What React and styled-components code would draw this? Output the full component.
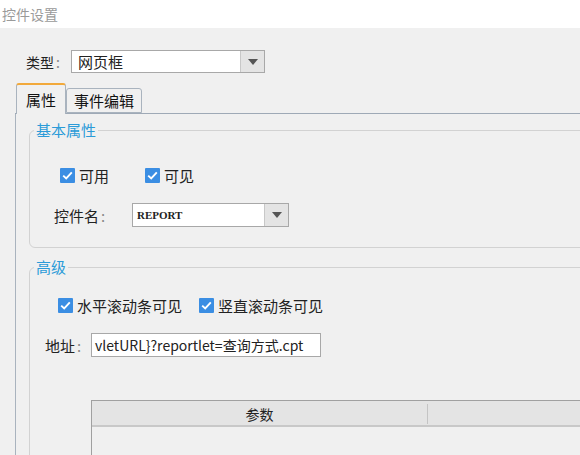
import React from 'react';
import styled, { createGlobalStyle } from 'styled-components';

const GlobalStyle = createGlobalStyle`
    html, body {
        margin: 0;
        padding: 0;
        background: #fff;
        overflow: hidden;
    }
    body {
        font-family: "Noto Sans CJK SC", "Liberation Sans", sans-serif;
        color: #222;
    }
`;

const Page = styled.div`
    width: 580px;
    height: 455px;
    overflow: hidden;
    display: flex;
    flex-direction: column;
`;

const Title = styled.div`
    height: 28px;
    line-height: 28px;
    padding-left: 2px;
    font-size: 14px;
    color: #9a9a9a;
    background: #fff;
`;

const Panel = styled.div`
    flex: 1;
    background: #f0f0f0;
    padding-top: 22px;
    overflow: hidden;
`;

const FormRow = styled.div`
    display: flex;
    align-items: center;
    height: ${p => p.h || 24}px;
    padding-left: ${p => p.indent || 0}px;
    margin-top: ${p => p.top || 0}px;
`;

const Label = styled.span`
    font-size: ${p => p.size || 15}px;
    width: ${p => p.w}px;
    white-space: nowrap;
    color: #222;
    & i {
        font-style: normal;
        color: #888;
        margin-left: 2px;
    }
`;

const Combo = styled.div`
    width: ${p => p.w}px;
    height: ${p => p.h || 23}px;
    box-sizing: border-box;
    border: 1px solid #a8a8a8;
    background: #fff;
    display: flex;
`;

const ComboText = styled.div`
    flex: 1;
    display: flex;
    align-items: center;
    padding-left: ${p => p.pad || 6}px;
    font-size: ${p => p.size || 15}px;
    font-family: ${p => p.serif ? '"Liberation Serif", serif' : 'inherit'};
    font-weight: ${p => p.serif ? 700 : 400};
    color: #222;
`;

const ComboButton = styled.div`
    width: 23px;
    background: #e4e4e4;
    border-left: 1px solid #c8c8c8;
    display: flex;
    align-items: center;
    justify-content: center;
    &::after {
        content: "";
        border-left: 5px solid transparent;
        border-right: 5px solid transparent;
        border-top: 6px solid #555;
    }
`;

const TabStrip = styled.div`
    display: flex;
    align-items: flex-end;
    margin-top: 10px;
    margin-left: 15px;
    height: 30px;
    border-bottom: 1px solid #9ea9b6;
`;

const Tab = styled.div`
    box-sizing: border-box;
    height: ${p => p.active ? 31 : 25}px;
    margin-bottom: ${p => p.active ? -1 : 0}px;
    margin-left: ${p => p.active ? 1 : 0}px;
    padding: 0 ${p => p.active ? 9 : 7}px;
    display: flex;
    align-items: center;
    font-size: 15px;
    color: #111;
    background: #f0f0f0;
    border: 1px solid #a9b3be;
    border-bottom: ${p => p.active ? 'none' : '1px solid #a9b3be'};
    border-top: ${p => p.active ? '2px solid #f2a93b' : '1px solid #a9b3be'};
    border-radius: 3px 3px 0 0;
`;

const TabPanel = styled.div`
    margin-left: 15px;
    width: 620px;
    height: 400px;
    border-left: 1px solid #a9b3be;
    padding-top: 8px;
`;

const Group = styled.fieldset`
    margin: ${p => p.top || 0}px 0 0 13px;
    padding: 0;
    border: 1px solid #d2d2d2;
    border-radius: 6px;
    min-width: 0;
    padding-bottom: ${p => p.bottom || 0}px;
`;

const Legend = styled.legend`
    margin-left: 4px;
    padding: 0 2px;
    font-size: 15px;
    line-height: 16px;
    color: #2b9bd8;
`;

const CheckRow = styled.div`
    display: flex;
    align-items: center;
    height: 20px;
    margin-top: ${p => p.top}px;
    padding-left: ${p => p.indent}px;
    gap: ${p => p.gap}px;
`;

const Check = styled.label`
    display: flex;
    align-items: center;
    gap: 4px;
    font-size: 15px;
    color: #222;
`;

const Box = styled.span`
    width: 15px;
    height: 15px;
    background: #3b8ee3;
    border-radius: 1px;
    display: flex;
    align-items: center;
    justify-content: center;
`;

const AddressField = styled.div`
    width: 230px;
    height: 24px;
    box-sizing: border-box;
    border: 1px solid #a8a8a8;
    background: #fff;
    overflow: hidden;
    display: flex;
    align-items: center;
    padding-left: 3px;
    white-space: nowrap;
    font-size: 14px;
    font-family: "Noto Sans CJK SC", "Liberation Sans", sans-serif;
    color: #222;
`;

const Table = styled.div`
    margin: 43px 0 0 61px;
    border-left: 1px solid #a0a0a0;
    border-top: 1px solid #a0a0a0;
    height: 60px;
`;

const TableHead = styled.div`
    display: grid;
    grid-template-columns: 336px 1fr;
    height: 26px;
    background: #e4e4e4;
    border-bottom: 2px solid #c8c8c8;
    box-sizing: border-box;
`;

const HeadCell = styled.div`
    display: flex;
    align-items: center;
    justify-content: center;
    font-size: 14px;
    color: #222;
    border-right: 1px solid #c4c4c4;
    margin: 3px 0;
`;

const CheckItem = ({ children }) => (
    <Check>
        <Box>
            <svg width="11" height="9" viewBox="0 0 11 9">
                <path d="M1.2 4.6 L4.2 7.4 L9.8 1.4" fill="none" stroke="#fff" strokeWidth="1.9" />
            </svg>
        </Box>
        {children}
    </Check>
);

export default function App() {
    return (
        <Page>
            <GlobalStyle />
            <Title>控件设置</Title>
            <Panel>
                <FormRow indent={26} h={23}>
                    <Label w={45} size={14}>类型<i>:</i></Label>
                    <Combo w={194}>
                        <ComboText>网页框</ComboText>
                        <ComboButton />
                    </Combo>
                </FormRow>

                <TabStrip>
                    <Tab active>属性</Tab>
                    <Tab>事件编辑</Tab>
                </TabStrip>

                <TabPanel>
                    <Group bottom={20}>
                        <Legend>基本属性</Legend>
                        <CheckRow top={27} indent={30} gap={36}>
                            <CheckItem>可用</CheckItem>
                            <CheckItem>可见</CheckItem>
                        </CheckRow>
                        <FormRow indent={24} top={18}>
                            <Label w={78}>控件名<i>:</i></Label>
                            <Combo w={157} h={24}>
                                <ComboText serif size={11} pad={4}>REPORT</ComboText>
                                <ComboButton />
                            </Combo>
                        </FormRow>
                    </Group>

                    <Group top={11}>
                        <Legend>高级</Legend>
                        <CheckRow top={20} indent={28} gap={17}>
                            <CheckItem>水平滚动条可见</CheckItem>
                            <CheckItem>竖直滚动条可见</CheckItem>
                        </CheckRow>
                        <FormRow indent={15} top={18}>
                            <Label w={46}>地址<i>:</i></Label>
                            <AddressField>vletURL}?reportlet=查询方式.cpt</AddressField>
                        </FormRow>
                        <Table>
                            <TableHead>
                                <HeadCell>参数</HeadCell>
                                <HeadCell />
                            </TableHead>
                        </Table>
                    </Group>
                </TabPanel>
            </Panel>
        </Page>
    );
}
